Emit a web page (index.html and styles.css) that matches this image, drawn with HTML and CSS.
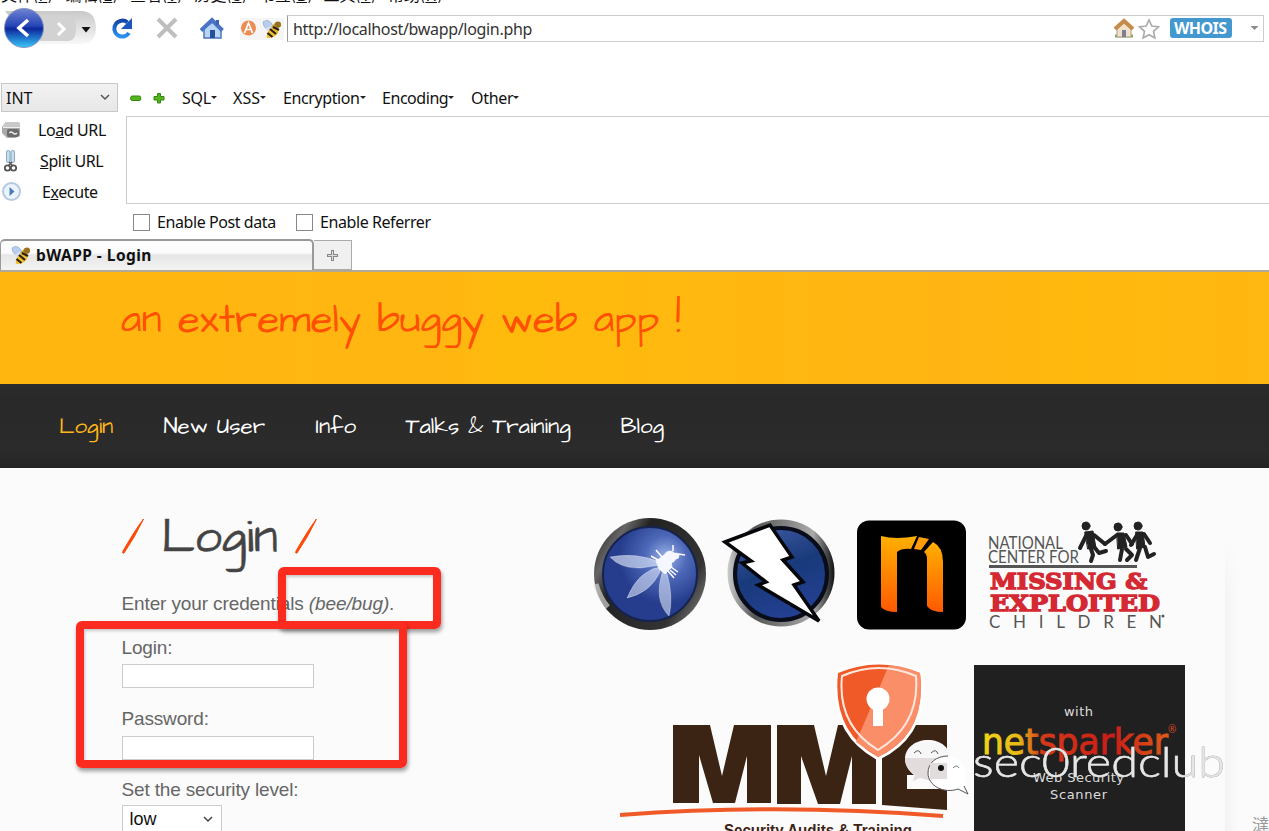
FILE: index.html
```html
<!DOCTYPE html>
<html lang="en">
<head>
<meta charset="utf-8">
<title>bWAPP - Login</title>
<link rel="stylesheet" href="styles.css">
</head>
<body>
<svg class="defs" width="0" height="0">
  <defs>
    <symbol id="bee" viewBox="0 0 20 20">
      <path d="M1 3q5-4 9 2l1 4-6 1Q1 8 1 3z" fill="#b9cdec" stroke="#8fa6cf" stroke-width=".7"/>
      <path d="M5 9q-3 1 1 3l6-3-2-3z" fill="#d5e1f5"/>
      <path d="M9 8l5-5 4 1 1 3-5 4z" fill="#c89a2a"/>
      <circle cx="16" cy="5.500" r="3" fill="#94701f"/>
      <path d="M13 8q5 1 3 6-3 5-11 5-1-4 2-8 3-3 6-3z" fill="#f0bd2d"/>
      <path d="M8 10l6 5M5.500 14l5 4M11 8l6 3" stroke="#292014" stroke-width="2.200"/>
    </symbol>
  </defs>
</svg>

<header class="browser">
  <div class="menubar"><span>文件(<u>F</u>)</span><span>编辑(<u>E</u>)</span><span>查看(<u>V</u>)</span><span>历史(<u>S</u>)</span><span>书签(<u>B</u>)</span><span>工具(<u>T</u>)</span><span>帮助(<u>H</u>)</span></div>
  <div class="toolbar">
    <svg class="controls" width="287" height="48" viewBox="0 0 287 48">
      <defs>
        <linearGradient id="back" x1="0" y1="0" x2="0" y2="1"><stop offset="0" stop-color="#7184d4"/><stop offset=".45" stop-color="#2445b4"/><stop offset=".52" stop-color="#0c279d"/><stop offset="1" stop-color="#35c8fa"/></linearGradient>
        <linearGradient id="pill" x1="0" y1="0" x2="0" y2="1"><stop offset="0" stop-color="#c9c9c9"/><stop offset="1" stop-color="#f8f8f8"/></linearGradient>
        <linearGradient id="blue" x1="0" y1="0" x2="0" y2="1"><stop offset="0" stop-color="#1545a8"/><stop offset="1" stop-color="#2b92f3"/></linearGradient>
      </defs>
      <path d="M5 8H81Q96 8 96 26 95 41 81 41H30z" fill="url(#pill)"/>
      <path d="M40 12H70Q76 14 76 25 76 38 68 38H40z" fill="#d2d2d2"/>
      <circle cx="24" cy="25" r="19.500" fill="url(#back)" stroke="#8694be"/>
      <path d="M28 17l-9 8 9 8" fill="none" stroke="#fff" stroke-width="3.600"/>
      <path d="M58 20l6 6-6 6" fill="none" stroke="#fff" stroke-width="3"/>
      <path d="M81.500 24h9L86 29.500z" fill="#111"/>
      <path d="M127.500 19.500A8 8 0 1 0 129 30" fill="none" stroke="url(#blue)" stroke-width="4"/>
      <path d="M132 15v11h-11z" fill="#1c57c0"/>
      <path d="M158 16l18 18M176 16l-18 18" fill="none" stroke="#bebebe" stroke-width="4"/>
      <path d="M204 25v10h17V25l-8-6z" fill="#b8d5f5" stroke="#4c77bc" stroke-width="1.500"/>
      <path d="M201 27.500L212 17 222.500 27.500" fill="none" stroke="#4a73c6" stroke-width="4"/>
      <path d="M216 17h3v5h-3z" fill="#3b62b4"/><path d="M210 27h5v8h-5z" fill="#234f9b"/>
      <path d="M240 15h44v22h-44z" fill="#f5f5f5"/>
      <circle cx="248.500" cy="25" r="7.500" fill="#ed8b51"/>
      <path d="M244.500 30l4-10 4 10M246 26.500h5" fill="none" stroke="#fff" stroke-width="1.700"/>
      <use href="#bee" x="262" y="16" width="20" height="20"/>
    </svg>
    <div class="address">
      <span class="url">http://localhost/bwapp/login.php</span>
      <svg width="156" height="24" viewBox="0 0 156 24">
        <path d="M8 20h18" stroke="#75ac65" stroke-width="3"/><path d="M10 12v9h14v-9l-7-6z" fill="#eee2cd" stroke="#b69b7e"/>
        <path d="M8 13L17 5l9 8" fill="none" stroke="#c58b4b" stroke-width="4"/><path d="M15 14h4v7h-4z" fill="#807f91"/>
        <path d="M42 4l2.800 6 6.700.8-5 4.500 1.400 6.700-5.900-3.300-5.900 3.300 1.400-6.700-5-4.500 6.700-.8z" fill="#fff" stroke="#aaa" stroke-width="1.600"/>
        <rect x="63" y="2" width="62" height="20" rx="3" fill="#4298cf"/>
        <text x="67" y="18" textLength="53" class="whois">WHOIS</text>
        <path d="M143.500 10h8l-4 4z" fill="#8b8b8b"/>
      </svg>
    </div>
  </div>

  <section class="hackbar">
    <div class="hack-menu">
      <div class="mode">INT<svg width="10" height="7"><path d="M1 1l4 4 4-4" fill="none" stroke="#555" stroke-width="1.500"/></svg></div>
      <svg class="plusminus" width="36" height="14"><rect x=".7" y="5" width="10" height="4.500" rx="1.500" fill="#52b51d" stroke="#36850f"/><path d="M27.500 2.500h3v3H34v3.500h-3.500v3h-3V9H24V5.500h3.500z" fill="#52b51d" stroke="#36850f"/></svg>
      <span class="menu sql">SQL</span><span class="menu xss">XSS</span><span class="menu enc">Encryption</span><span class="menu cod">Encoding</span><span class="menu oth">Other</span>
    </div>
    <div class="hack-body">
      <div class="actions">
        <div><svg width="24" height="24"><path d="M6 4h11l3 1v13l-5 2H7l-5-5V9z" fill="#a9a9a9"/><path d="M6 4h11l3 1v4H2z" fill="#c9c9c9"/><path d="M3 9.500h17" stroke="#eee" fill="none"/><rect x="7" y="11" width="12" height="8" rx="2" fill="#6c6c6c"/><path d="M9.500 15q1.500-2 3.500 0t4 0" fill="none" stroke="#eee" stroke-width="1.500"/></svg><span class="load">Lo<u>a</u>d URL</span></div>
        <div><svg width="24" height="24"><rect x="6.500" y="1.500" width="3.500" height="12" rx="1.700" fill="#c9dfed" stroke="#86a9c2"/><rect x="11" y="1.500" width="3.500" height="12" rx="1.700" fill="#c9dfed" stroke="#86a9c2"/><circle cx="7.500" cy="19" r="2.700" fill="none" stroke="#555" stroke-width="1.800"/><circle cx="13.500" cy="19" r="2.700" fill="none" stroke="#555" stroke-width="1.800"/><path d="M8 17l4-4M13 17l-4-4" stroke="#555" stroke-width="1.500"/></svg><span class="split"><u>S</u>plit URL</span></div>
        <div><svg width="24" height="24"><circle cx="11.500" cy="11.500" r="8.500" fill="#eaf4ff" stroke="#b6c9df" stroke-width="2"/><path d="M9.500 7l5 4.500-5 4.500z" fill="#4a7db5"/></svg><span class="exec">E<u>x</u>ecute</span></div>
      </div>
      <div class="query"></div>
    </div>
    <div class="options"><i></i><span class="post">Enable Post data</span><i></i><span class="ref">Enable Referrer</span></div>
  </section>
  <div class="tabs">
    <div class="tab"><svg width="20" height="20"><use href="#bee" width="20" height="20"/></svg><b>bWAPP - Login</b></div>
    <div class="newtab"><svg width="11" height="11"><path d="M5.500 0v11M0 5.500h11" stroke="#888" stroke-width="3"/><path d="M5.500 1v9M1 5.500h9" stroke="#ddd"/></svg></div>
  </div>
</header>

<div class="banner"><span class="slogan">an extremely buggy web app !</span></div>
<nav class="sitenav"><a class="active">Login</a><a class="newuser">New User</a><a class="info">Info</a><a class="talks">Talks &amp; Training</a><a class="blog">Blog</a></nav>

<main>
  <section class="login">
    <h1><svg width="22" height="36"><path d="M21.500 1Q13 19 2 35q-2 1-1-2Q13 12 21.500 1z" fill="#fb4a08" stroke="#fb4a08" stroke-width="1"/></svg><span>Login</span><svg width="22" height="36"><path d="M21.500 1Q13 19 2 35q-2 1-1-2Q13 12 21.500 1z" fill="#fb4a08" stroke="#fb4a08" stroke-width="1"/></svg></h1>
    <p>Enter your credentials <em>(bee/bug)</em>.</p>
    <label>Login:</label><div class="field"></div>
    <label>Password:</label><div class="field"></div>
    <label>Set the security level:</label>
    <div class="level">low<svg width="10" height="7"><path d="M1 1l4 4 4-4" fill="none" stroke="#444" stroke-width="1.500"/></svg></div>
  </section>

  <section class="partners">
    <div class="logos-top">
      <svg class="owasp" width="245" height="118" viewBox="0 0 245 118">
        <defs>
          <linearGradient id="ring" x1="0" y1=".2" x2="1" y2=".8"><stop offset="0" stop-color="#333"/><stop offset=".15" stop-color="#666"/><stop offset=".3" stop-color="#222"/><stop offset=".8" stop-color="#333"/><stop offset="1" stop-color="#777"/></linearGradient>
          <linearGradient id="ring2" x1="0" y1="0" x2="1" y2="0"><stop offset="0" stop-color="#ccc"/><stop offset=".25" stop-color="#555"/><stop offset=".8" stop-color="#aaa"/><stop offset="1" stop-color="#111"/></linearGradient>
          <radialGradient id="orb" cx=".67" cy=".32"><stop offset="0" stop-color="#9bb3e6"/><stop offset=".45" stop-color="#4d68b8"/><stop offset="1" stop-color="#263d8d"/></radialGradient>
          <linearGradient id="orb2" x1="0" y1="0" x2=".4" y2="1"><stop offset="0" stop-color="#445eaa"/><stop offset=".55" stop-color="#193a7a"/><stop offset="1" stop-color="#223f91"/></linearGradient>
        </defs>
        <circle cx="60" cy="60" r="56" fill="url(#ring)"/>
        <path d="M6 70q4 14 12 23" stroke="#d6d6d3" stroke-width="5" fill="none" opacity=".7"/>
        <circle cx="60" cy="60" r="47" fill="url(#orb)" stroke="#14234f" stroke-width="2"/>
        <g fill="#dce5f8" stroke="#fff" stroke-width=".6">
          <path d="M70 48Q46 38 20 43 31 55 51 54L70 51z" fill-opacity=".65" stroke-opacity=".5"/>
          <path d="M70 53Q48 57 37 84 60 79 70 58z" fill-opacity=".6" stroke-opacity=".5"/>
          <path d="M73 56Q63 86 79 102 84 82 76 56z" fill-opacity=".6" stroke-opacity=".5"/>
          <g fill="#f4f7ff"><path d="M66 47l8-6 7 5 1 7-7 7-6-5z"/><circle cx="80" cy="43" r="6"/><circle cx="86" cy="42" r="3"/></g>
          <path d="M72 43l-6-7M68 46l-7-4M81 53l7 5M78 57l6 7M83 37l0-6M88 40l7 1M80 56l6 5" fill="none" stroke-width="1.500"/>
        </g>
        <circle cx="191" cy="59" r="53.500" fill="url(#ring2)"/>
        <circle cx="191" cy="60" r="46" fill="url(#orb2)" stroke="#080d19" stroke-width="4"/>
        <path d="M135 28L180 11 202 43 193 46 213 68 204 71 229 107 168 71 176 68 152 49 161 47z" fill="#fff" stroke="#05070a" stroke-width="3.500"/>
      </svg>
      <svg class="n" width="110" height="110" viewBox="0 0 110 110">
        <linearGradient id="fire" x1="0" y1="0" x2="0" y2="1"><stop stop-color="#ffb000"/><stop offset="1" stop-color="#ff5900"/></linearGradient>
        <rect width="109" height="109" y=".5" rx="12"/>
        <path d="M24 16Q39 20 60 16L54 29Q45 28 40 32V92Q28 92 24 87z" fill="url(#fire)"/>
        <path d="M62 17l10 2-8 11-7-1z" fill="#ff9d08"/><path d="M76 22q10 5 10 20V92Q74 92 70 86V39q0-5-3-7z" fill="url(#fire)"/>
      </svg>
      <svg class="ncmec" width="180" height="118" viewBox="0 0 180 118">
        <g class="avant" fill="#555"><text x="0" y="34.500" textLength="75" lengthAdjust="spacingAndGlyphs" font-size="17">NATIONAL</text><text x="0" y="48.500" textLength="91" lengthAdjust="spacingAndGlyphs" font-size="17">CENTER FOR</text></g>
        <path d="M1 52.500h148" stroke="#555" stroke-width="3"/>
        <g class="slab"><text x="2" y="75" textLength="157" lengthAdjust="spacingAndGlyphs">MISSING &amp;</text><text x="2" y="97" textLength="170" lengthAdjust="spacingAndGlyphs">EXPLOITED</text></g>
        <text class="children" x="1" y="114" textLength="173">CHILDREN</text><circle cx="175" cy="102" r="1.500" fill="#555"/>
        <g fill="#222" stroke="#222" stroke-linecap="round" stroke-linejoin="round">
          <circle cx="98" cy="12" r="4"/><path d="M97 18l8-1 3 17-8 1z"/><path d="M99 20l-7 14M106 21l11 9M103 35l2 6-2 6M107 34l4 5 7-2" fill="none" stroke-width="4"/>
          <circle cx="130" cy="13" r="4"/><path d="M129 19h7l3 14-9 2z"/><path d="M129 21l-12 9M138 21l6 9M134 35l-2 11M138 35l6 6-5 5" fill="none" stroke-width="4"/>
          <circle cx="150" cy="12" r="4"/><path d="M148 18h7l2 15-8 2z"/><path d="M149 21l-6 10M156 20l6 9M152 34l-4 12M157 33l3 10 6-3" fill="none" stroke-width="4"/>
        </g>
      </svg>
    </div>
    <div class="logos-bottom">
      <svg width="330" height="170" viewBox="618 661 330 170">
        <g fill="#3b2414"><path d="M673 725h37l12 51 12-51h37v78h-24v-47l-12 47h-22l-14-48v48h-26z"/><path d="M777 725h37l12 51 12-51h38v79h-24v-48l-12 48h-22l-17-48v48h-24z"/><path d="M882 725h65v85l-65-5zM907 775v14h40v-14z" fill-rule="evenodd"/></g>
        <path d="M838 673Q878 656 920 673 927 734 878 757 832 732 838 673z" fill="#f05a28" stroke="#fff" stroke-width="6"/>
        <path d="M838 673Q878 656 920 673 927 734 878 757 832 732 838 673z" fill="#f05a28"/>
        <path d="M889 665Q907 667 920 673 927 734 878 757L856 742z" fill="#f98e68"/>
        <path d="M842 676Q879 660 916 676 920 725 878 750 837 725 842 676z" fill="none" stroke="#ffe7de" stroke-width="2"/>
        <circle cx="878" cy="699" r="11.500" fill="#fff"/><path d="M873 706h10v20h-10z" fill="#fff"/>
        <path d="M620 815Q780 803 943 816" fill="none" stroke="#f05a28" stroke-width="4"/>
        <text class="audits" x="724" y="836" textLength="188" lengthAdjust="spacingAndGlyphs">Security Audits &amp; Training</text>
      </svg>
      <svg width="211" height="166" viewBox="0 0 211 166">
        <linearGradient id="spark" x1="0" y1="0" x2="1" y2="0"><stop offset="0" stop-color="#f3d618"/><stop offset=".2" stop-color="#e5b916"/><stop offset=".32" stop-color="#d63a18"/><stop offset=".7" stop-color="#c91d18"/><stop offset="1" stop-color="#dd5b18"/></linearGradient>
        <rect width="211" height="166" fill="#202020"/>
        <text class="scanner" x="90" y="51" textLength="29">with</text>
        <text class="netsparker" x="8" y="89" textLength="186" lengthAdjust="spacingAndGlyphs" fill="url(#spark)" stroke="url(#spark)">netsparker</text><text x="194" y="68" fill="#d44a25" font-size="10">®</text>
        <text class="scanner" x="59" y="117" textLength="91">Web Security</text><text class="scanner" x="76" y="134" textLength="57">Scanner</text>
      </svg>
    </div>
  </section>
  <div class="edge"></div>
</main>
<div class="mark mark-credentials"></div>
<div class="mark mark-form"></div>
<svg class="watermark" width="330" height="65" viewBox="900 735 330 65">
  <path d="M928 740c-13 0-23 8-23 19 0 7 4 12 9 16l-4 7 10-4q26 4 31-17c0-13-10-21-23-21z" fill="#f7f7f7"/>
  <path d="M905 758h45v9q-12 1-14 15l-16-4-7 3 2-6q-10-8-10-17z" fill="#e3dcdd"/>
  <path d="M914 753q5-5 7 1M931 753q5-5 7 1" stroke="#555" fill="none"/>
  <path d="M947 756c-11 0-19 7-19 17 0 13 16 21 30 16l10 5-4-8c7-14-2-30-17-30z" fill="#fff" fill-opacity=".9"/>
  <path d="M948 756c-12 0-20 7-20 17 0 13 16 21 30 16l10 5-4-8" fill="none" stroke="#555"/>
  <path d="M930 763h17v16h-17z" fill="#e2dcdc"/><circle cx="941" cy="768" r="3" fill="#111"/><path d="M953 768q4-4 6 0" stroke="#777" fill="none"/>
  <text x="973" y="777" textLength="252" lengthAdjust="spacingAndGlyphs">sec0redclub</text>
</svg>
<span class="corner">澾</span>
</body>
</html>
```
FILE: styles.css
```css
* { box-sizing: border-box; }
body { margin: 0; width: 1269px; height: 831px; overflow: hidden; position: relative; background: #fff; font-family: "Noto Sans", "Noto Sans CJK SC", sans-serif; font-size: 16px; color: #111; }
svg { display: block; flex: none; }
.defs { position: absolute; }
.browser { height: 272px; display: flex; flex-direction: column; }
.menubar { height: 3px; overflow: hidden; display: flex; align-items: flex-end; gap: 14.500px; padding-left: 1px; white-space: nowrap; font: 16px/17px "Noto Sans CJK SC", sans-serif; }
.menubar span { width: 50px; }
.toolbar { height: 80px; display: flex; align-items: flex-start; }
.address { width: 977px; height: 27px; margin-top: 12px; border: 1px solid #ccc; border-left-color: #999; display: flex; justify-content: space-between; padding-left: 5px; }
.url { line-height: 27px; color: #333; letter-spacing: -.32px; }
.whois { font: bold 16px "Noto Sans", sans-serif; fill: #fff; }
.hackbar { height: 155px; }
.hack-menu { height: 29px; display: flex; align-items: center; white-space: nowrap; }
.mode { width: 117px; height: 29px; margin-left: 1px; border: 1px solid #c7c7c7; background: linear-gradient(#f2f2f2, #e7e7e7); display: flex; align-items: center; justify-content: space-between; padding: 0 7px 0 4px; }
.plusminus { margin: 0 17px 0 12px; }
.menu { display: flex; align-items: center; }
.menu::after { content: ""; border: 3px solid transparent; border-top: 3px solid #222; border-bottom: 0; }
.sql { width: 51px; margin-left: -1px; letter-spacing: -.3px; }
.xss { width: 50px; }
.enc { width: 99px; letter-spacing: -.4px; }
.cod { width: 89px; letter-spacing: -.45px; }
.oth { letter-spacing: -.3px; }
.hack-body { display: flex; margin-top: 2px; height: 92px; }
.actions { width: 126px; }
.actions div { height: 31.300px; display: flex; align-items: center; }
.actions span { white-space: nowrap; letter-spacing: -.4px; }
.load { margin-left: 14px; }
.split { margin-left: 16px; }
.exec { margin-left: 18px; }
.query { flex: 1; height: 88px; margin-top: 2px; border: 1px solid #ccc; border-right: 0; }
.options { height: 32px; display: flex; align-items: center; padding-left: 133px; }
.options i { width: 17px; height: 17px; border: 1px solid #888; margin-right: 7px; }
.options span { white-space: nowrap; letter-spacing: -.42px; }
.post { width: 139px; }
.tabs { height: 34px; display: flex; align-items: flex-end; border-bottom: 2px solid #b1a998; }
.tab { width: 314px; height: 31px; border: 2px solid #999; border-bottom: 0; border-left-width: 1px; border-radius: 5px 5px 0 0; display: flex; align-items: center; gap: 5px; padding: 0 0 2px 10px; background: linear-gradient(#fcfcfc 40%, #e6e6e6 50%, #f3f3f3); font-size: 15.500px; letter-spacing: .45px; }
.newtab { width: 38px; height: 30px; border: 1px solid #aaa; border-left: 0; background: #f0f0f0; display: flex; align-items: center; justify-content: center; }
.banner { height: 112px; padding: 23px 0 0 121px; background: linear-gradient(90deg, #ffb70f, #ffb611 35%, #ffbb0c 40%, #ffb413 75%, #ffb90d 85%, #ffb711); color: #ff5000; }
.slogan { font: 40.400px/50px "Architects Daughter", Lato, sans-serif; white-space: nowrap; }
.sitenav { height: 84px; display: flex; align-items: center; padding: 2px 0 0 59px; background: linear-gradient(#2c2c2c, #292929 20%, #2b2b2b 80%, #242424); font: 22.400px/30px "Architects Daughter", Lato, sans-serif; color: #fff; white-space: nowrap; }
.sitenav .active { color: #ffb717; width: 104.500px; }
.newuser { width: 152px; }
.info { width: 90px; }
.talks { width: 215px; }
main { height: 363px; display: flex; position: relative; background: #fbfbfb; }
.login { width: 590px; padding: 43px 0 0 121.500px; font: 19px/22px "Liberation Sans", Arial, sans-serif; color: #666; }
h1 { margin: 0; height: 58px; display: flex; align-items: center; font: 48px/58px "Architects Daughter", Lato, sans-serif; color: #444; -webkit-text-stroke: .4px #444; }
h1 svg { margin-bottom: 9px; }
h1 span { width: 133px; margin: 0 0 4px 18px; }
.login p { margin: 24px 0 21px; white-space: nowrap; letter-spacing: -.12px; }
label { display: block; height: 28px; letter-spacing: -.16px; }
label:first-of-type { padding-top: 1px; }
.field { width: 192px; height: 24px; border: 1px solid #ccc; background: #fff; margin-bottom: 19.500px; }
.level { width: 100px; height: 30px; border: 1px solid #ccc; background: #fff; display: flex; align-items: center; justify-content: space-between; padding: 0 8px 2px 7px; color: #111; font-size: 18px; margin-top: -2px; }
.partners { padding-top: 46px; margin-left: .5px; }
.logos-top { display: flex; align-items: flex-start; height: 147px; margin-left: -.5px; }
.n { margin: 6px 22px 0 22px; }
.ncmec { margin-left: -1px; }
.logos-bottom { display: flex; align-items: flex-end; gap: 26px; padding-left: 27.500px; margin-left: -.5px; }
.avant { font-family: Lato, sans-serif; }
.slab { font: bold 23px "DejaVu Serif", serif; fill: #d42932; stroke: #d42932; stroke-width: 1.400; }
.children { font: 17px Lato, sans-serif; fill: #555; }
.audits { font: bold 16px "Liberation Sans", sans-serif; fill: #3b2414; }
.scanner { font: 13px "DejaVu Sans", sans-serif; fill: #ddd; }
.netsparker { font: 36px "DejaVu Sans", sans-serif; stroke-width: 1; }
.edge { position: absolute; left: 1225px; top: 70px; width: 14px; height: 293px; background: linear-gradient(90deg, #f3f3f3, #fbfbfb); -webkit-mask-image: linear-gradient(transparent, #000 60px); }
.mark { position: absolute; border: 8px solid #fb2b1f; border-radius: 6px; box-shadow: 1px 3px 4px #0006, inset 1px 2px 3px #0003; }
.mark-credentials { left: 278px; top: 567px; width: 163px; height: 62px; }
.mark-form { left: 76px; top: 621px; width: 331px; height: 147px; }
.watermark { position: absolute; left: 900px; top: 735px; }
.watermark text { font: 300 42px Lato, sans-serif; fill: #e6e6e6; stroke: #e6e6e6; stroke-width: .5; filter: drop-shadow(.8px .8px .4px #666); }
.corner { position: absolute; left: 1252px; top: 815px; color: #999; font: 17px/17px "Noto Sans CJK SC", sans-serif; }
```
